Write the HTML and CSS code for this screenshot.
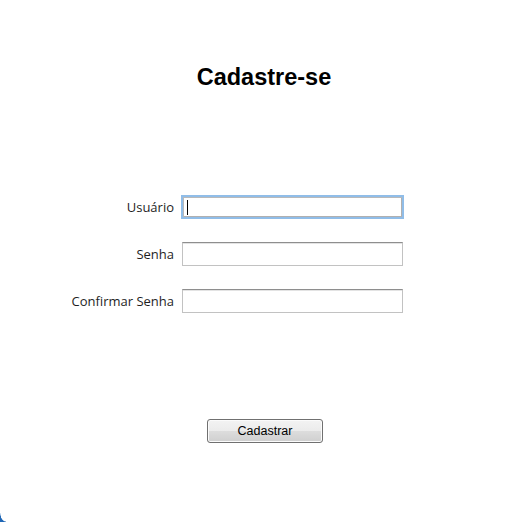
FILE: index.html
```html
<!DOCTYPE html>
<html lang="pt">
<head>
<meta charset="utf-8">
<title>Cadastre-se</title>
<link rel="stylesheet" href="styles.css">
</head>
<body>
<main class="window">
  <h1 class="title">Cadastre-se</h1>
  <form class="form">
    <label class="label" for="usuario">Usuário</label>
    <div class="field field-focus" id="usuario"><span class="caret"></span></div>
    <label class="label" for="senha">Senha</label>
    <div class="field" id="senha"></div>
    <label class="label" for="confirmar">Confirmar Senha</label>
    <div class="field" id="confirmar"></div>
  </form>
  <div class="actions">
    <button class="button" type="button">Cadastrar</button>
  </div>
  <div class="corner"></div>
</main>
</body>
</html>
```
FILE: styles.css
```css
html, body {
  margin: 0;
  padding: 0;
  background: #ffffff;
}
.window {
  position: relative;
  width: 526px;
  height: 522px;
  overflow: hidden;
  background: #ffffff;
  display: flex;
  flex-direction: column;
  align-items: center;
}
.title {
  margin: 63px 0 0 2px;
  font-family: "Liberation Sans", Arial, sans-serif;
  font-weight: bold;
  font-size: 23.5px;
  line-height: 28px;
  color: #000;
}
.form {
  margin: 104px 0 0 0;
  align-self: flex-start;
  margin-left: 60px;
  display: grid;
  grid-template-columns: 114px 223px;
  column-gap: 7px;
  row-gap: 23px;
  align-items: center;
}
.label {
  justify-self: end;
  font-family: "Open Sans", "Noto Sans", sans-serif;
  font-size: 13px;
  color: #1e1e1e;
  line-height: 16px;
}
.field {
  box-sizing: border-box;
  height: 24px;
  width: 221px;
  margin-left: 1px;
  border: 1px solid #c2c2c2;
  border-top-color: #8e8e8e;
  box-shadow: inset 0 1px 0 #e3e3e3;
  background: #fff;
  position: relative;
}
.field-focus {
  width: 223px;
  margin-left: 0;
  border: 2px solid #90bde8;
  box-shadow: inset 1px 1px 0 #b9b9b9, inset -1px -1px 0 #b0b0b0;
}
.caret {
  display: block;
  position: absolute;
  left: 4px;
  top: 3px;
  width: 1px;
  height: 15px;
  background: #000;
}
.actions {
  margin-top: 106px;
  margin-left: 4px;
}
.button {
  box-sizing: border-box;
  width: 116px;
  height: 24px;
  border: 1px solid #707070;
  border-radius: 3px;
  background: linear-gradient(#f3f3f3 0%, #ebebeb 50%, #dddddd 50%, #cfcfcf 100%);
  box-shadow: inset 0 0 0 1px #fbfbfb;
  font-family: "Liberation Sans", Arial, sans-serif;
  font-size: 12.5px;
  color: #000;
  padding: 0;
}
.corner {
  position: absolute;
  left: 0;
  bottom: 0;
  width: 6px;
  height: 9px;
  background: radial-gradient(ellipse 6px 9px at 100% 0, #ffffff 90%, #1f66b5 100%);
}
```
